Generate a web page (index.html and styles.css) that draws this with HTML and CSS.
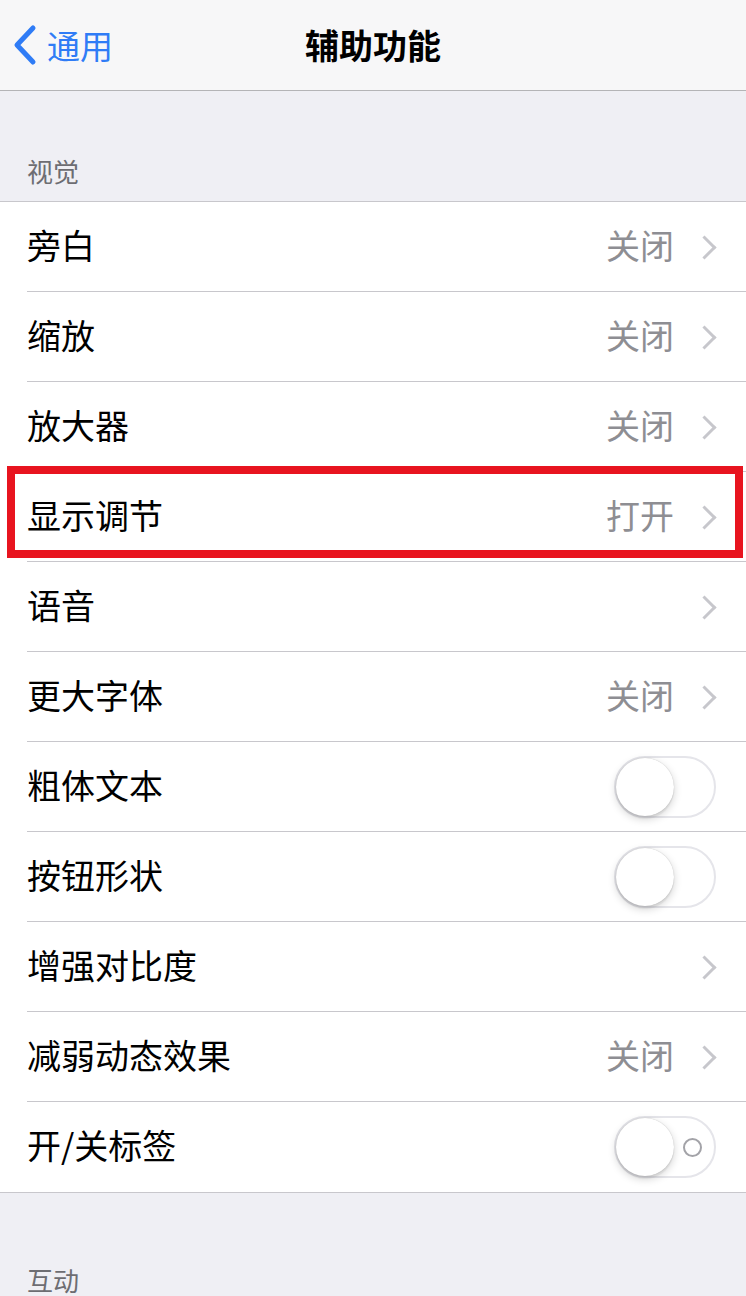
FILE: index.html
```html
<!DOCTYPE html>
<html lang="zh-CN">
<head>
<meta charset="utf-8">
<link rel="stylesheet" href="styles.css">
</head>
<body>
<div class="screen">
  <header class="nav">
    <div class="back">
      <svg class="back-icon" viewBox="0 0 26 42" width="26" height="42"><path d="M21 4 L5 21 L21 38" fill="none" stroke="#2f7cf6" stroke-width="5" stroke-linecap="round" stroke-linejoin="round"/></svg>
      <span class="back-text">通用</span>
    </div>
    <h1 class="title">辅助功能</h1>
  </header>

  <div class="section-head">视觉</div>
  <ul class="list">
    <li class="row"><span class="label">旁白</span><span class="value">关闭</span><span class="chev"></span></li>
    <li class="row"><span class="label">缩放</span><span class="value">关闭</span><span class="chev"></span></li>
    <li class="row"><span class="label">放大器</span><span class="value">关闭</span><span class="chev"></span></li>
    <li class="row highlighted"><span class="label">显示调节</span><span class="value">打开</span><span class="chev"></span><span class="mark"></span></li>
    <li class="row"><span class="label">语音</span><span class="chev"></span></li>
    <li class="row"><span class="label">更大字体</span><span class="value">关闭</span><span class="chev"></span></li>
    <li class="row"><span class="label">粗体文本</span><span class="switch"><span class="knob"></span></span></li>
    <li class="row"><span class="label">按钮形状</span><span class="switch"><span class="knob"></span></span></li>
    <li class="row"><span class="label">增强对比度</span><span class="chev"></span></li>
    <li class="row"><span class="label">减弱动态效果</span><span class="value">关闭</span><span class="chev"></span></li>
    <li class="row"><span class="label">开/关标签</span><span class="switch"><span class="knob"></span><span class="o-label"></span></span></li>
  </ul>
  <div class="section-head second">互动</div>
</div>
</body>
</html>
```

FILE: styles.css
```css
* { box-sizing: border-box; }
html, body { margin: 0; padding: 0; }
body {
  background: #efeff4;
  font-family: "Noto Sans CJK SC", "Noto Sans", sans-serif;
  width: 746px;
  height: 1296px;
  overflow: hidden;
}
.screen { width: 746px; }

.nav {
  height: 91px;
  background: #f7f7f8;
  border-bottom: 1px solid #b4b4b6;
  display: flex;
  align-items: center;
  justify-content: center;
  position: relative;
}
.back {
  position: absolute;
  left: 12px;
  top: 24px;
  display: flex;
  align-items: center;
  gap: 9px;
}
.back-icon { display: block; }
.back-text {
  color: #2f7cf6;
  font-size: 33px;
  line-height: 42px;
}
.title {
  margin: 0;
  font-size: 34px;
  font-weight: 700;
  color: #000;
  line-height: 44px;
}

.section-head {
  height: 110px;
  padding: 0 27px 12px;
  display: flex;
  align-items: flex-end;
  color: #6d6d72;
  font-size: 26px;
  line-height: 36px;
}

.list {
  list-style: none;
  margin: 0;
  padding: 0;
  background: #fff;
  border-top: 1px solid #c8c7cc;
  border-bottom: 1px solid #c8c7cc;
}
.row {
  height: 90px;
  display: flex;
  align-items: center;
  padding: 0 30px 4px 27px;
  position: relative;
}
.row + .row::before {
  content: "";
  position: absolute;
  left: 27px;
  right: 0;
  top: -1px;
  height: 1px;
  background: #c8c7cc;
}
.label {
  flex: 1;
  font-size: 34px;
  color: #000;
  line-height: 44px;
}
.value {
  font-size: 34px;
  color: #8e8e93;
  line-height: 44px;
  margin-right: 22px;
}
.chev {
  width: 17px;
  height: 17px;
  border-top: 3px solid #c7c7cc;
  border-right: 3px solid #c7c7cc;
  transform: rotate(45deg);
  margin-right: 3px;
  margin-top: 4px;
}
.mark {
  position: absolute;
  left: 7px;
  right: 3px;
  top: -6px;
  bottom: 4px;
  border: 8px solid #e8141f;
  z-index: 2;
}

.switch {
  width: 102px;
  height: 62px;
  border-radius: 31px;
  border: 2px solid #e5e5ea;
  background: #fff;
  position: relative;
  margin-top: 4px;
}
.knob {
  position: absolute;
  left: 0;
  top: 0;
  width: 58px;
  height: 58px;
  border-radius: 50%;
  background: #fff;
  box-shadow: 0 3px 8px rgba(0,0,0,0.18), 0 0 1px rgba(0,0,0,0.25), 0 3px 1px rgba(0,0,0,0.05);
}
.o-label {
  position: absolute;
  right: 12px;
  top: 20px;
  width: 19px;
  height: 19px;
  border-radius: 50%;
  border: 2px solid #a3a3a8;
}

.second { height: 105px; padding-bottom: 0; overflow: hidden; }
```
